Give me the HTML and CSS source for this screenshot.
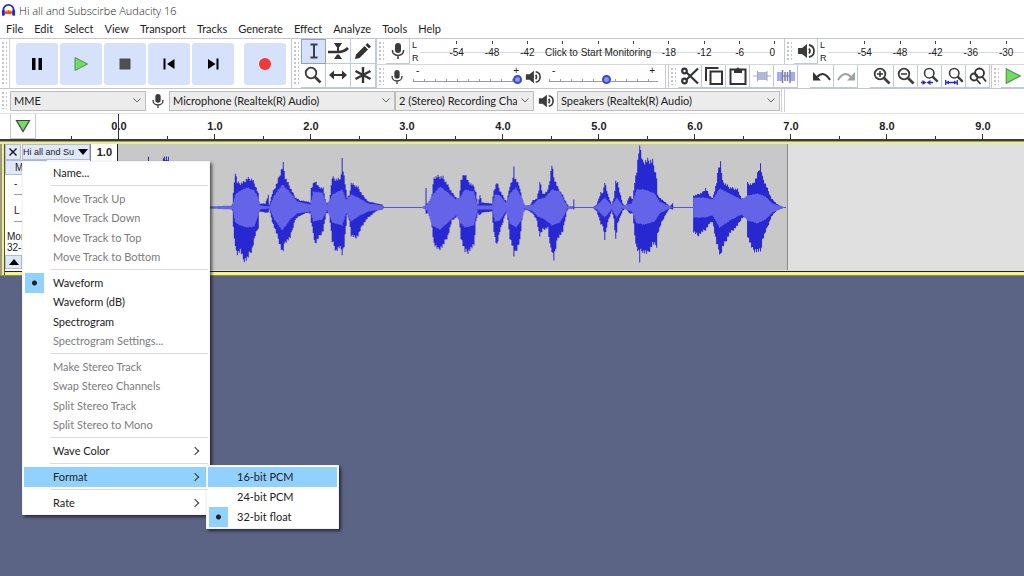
FILE: index.html
```html
<!DOCTYPE html>
<html lang="en">
<head>
    <meta charset="UTF-8">
    <meta name="viewport" content="width=device-width, initial-scale=1.0">
    <title>Hi all and Subscirbe Audacity 16</title>
    <link rel="stylesheet" href="styles.css">
</head>
<body>

    <!-- Shared icons -->
    <svg class="icon-defs" aria-hidden="true">
        <symbol id="mic" viewBox="0 0 16 18">
            <rect x="5" y="1" width="6" height="10" rx="3" fill="#3c3c3c"/>
            <path d="M2.5 8v1a5.5 4.5 0 0 0 11 0V8M8 13.5V17" fill="none" stroke="#3c3c3c" stroke-width="1.500"/>
        </symbol>
        <symbol id="speaker" viewBox="0 0 18 16">
            <path d="M1 5h4l5-4v14l-5-4H1z" fill="#3c3c3c"/>
            <path d="M12 5.500q2 2.500 0 5M12 2q5 1 5 6t-5 6" fill="none" stroke="#3c3c3c" stroke-width="1.800"/>
        </symbol>
        <symbol id="lens" viewBox="0 0 18 18">
            <circle cx="7" cy="7" r="5.300" fill="none" stroke="#3c3c3c" stroke-width="1.800"/>
            <path d="M10.500 10.500l6 6" stroke="#3c3c3c" stroke-width="2.600"/>
        </symbol>
        <symbol id="play" viewBox="0 0 16 16">
            <path d="M2 1.500l12.500 6.500L2 14.500z" fill="#6ce05c" stroke="#5a8a5a" stroke-width="1"/>
        </symbol>
    </svg>

    <header class="titlebar">
        <svg class="logo" viewBox="0 0 16 14">
            <path d="M3.500 8.500q4.500-3 9 0v3h-9z" fill="#f7a531"/>
            <path d="M4 10l1.500-2 1 2 1.500-3 1.500 3 1-2 1.500 2-1.500 1h-5z" fill="#e8402c"/>
            <path d="M2.500 8.500V7a5.500 5.500 0 0 1 11 0v1.500" fill="none" stroke="#2c2cc0" stroke-width="2"/>
            <rect x="1" y="7" width="3" height="6" rx="1" fill="#2424c8"/>
            <rect x="12" y="7" width="3" height="6" rx="1" fill="#2424c8"/>
        </svg>
        <h1>Hi all and Subscirbe Audacity 16</h1>
    </header>

    <nav class="menubar">
        <button>File</button>
        <button>Edit</button>
        <button>Select</button>
        <button>View</button>
        <button>Transport</button>
        <button>Tracks</button>
        <button>Generate</button>
        <button>Effect</button>
        <button>Analyze</button>
        <button>Tools</button>
        <button>Help</button>
    </nav>

    <div class="dock">
        <!-- Transport -->
        <div class="toolbar transport">
            <span class="grip"></span>
            <div class="transport-buttons">
                <button aria-label="Pause"><svg viewBox="0 0 16 16"><path d="M3 2h3.500v12H3zM9.500 2H13v12H9.500z"/></svg></button>
                <button aria-label="Play"><svg viewBox="0 0 16 16"><use href="#play"/></svg></button>
                <button aria-label="Stop"><svg viewBox="0 0 16 16"><rect x="2.500" y="2.500" width="11" height="11" fill="#4c5050"/></svg></button>
                <button aria-label="Skip to Start"><svg viewBox="0 0 16 16"><path d="M2.500 2.500h2v11h-2zM13.500 3v10L6 8z"/></svg></button>
                <button aria-label="Skip to End"><svg viewBox="0 0 16 16"><path d="M11.500 2.500h2v11h-2zM3 3v10l7.500-5z"/></svg></button>
                <button class="record" aria-label="Record"><svg viewBox="0 0 16 16"><circle cx="8" cy="8" r="6" fill="#f23838"/></svg></button>
            </div>
        </div>

        <!-- Tools -->
        <div class="toolbar tools">
            <span class="grip"></span>
            <div class="tool-grid">
                <button class="tool selected" aria-label="Selection Tool"><svg viewBox="0 0 18 18"><path d="M5.500 2.500h7M5.500 15.500h7M9 2.500v13" stroke="#3c3c50" stroke-width="2" fill="none"/></svg></button>
                <button class="tool wide" aria-label="Envelope Tool"><svg viewBox="0 0 22 18"><path d="M7 1h8l-2.500 4h-3zM7 17h8l-3-4.500h-2z" fill="#333"/><path d="M1 10h10q6 0 10-4" stroke="#333" stroke-width="2.600" fill="none"/><path d="M11 3v7" stroke="#333" stroke-width="2"/></svg></button>
                <button class="tool" aria-label="Draw Tool"><svg viewBox="0 0 18 18"><path d="M1 17l1-4.500L10.500 4 14 7.500 5.500 16zM11.500 3l2-2L17 4.500l-2 2z" fill="#333"/></svg></button>
                <button class="tool" aria-label="Zoom Tool"><svg viewBox="0 0 18 18"><use href="#lens"/></svg></button>
                <button class="tool" aria-label="Time Shift Tool"><svg viewBox="0 0 18 18"><path d="M0 9l5-4.500V8h8V4.500L18 9l-5 4.500V10H5v3.500z" fill="#333"/></svg></button>
                <button class="tool" aria-label="Multi-Tool"><svg viewBox="0 0 18 18"><path d="M9 1v16M1.500 5l15 8M16.500 5l-15 8" stroke="#333" stroke-width="2.400"/></svg></button>
            </div>
        </div>

        <div class="dock-right">
            <div class="dock-row">
                <!-- Recording meter -->
                <div class="toolbar meter">
                    <span class="grip"></span>
                    <button class="tool" aria-label="Record Meter"><svg viewBox="0 0 16 18"><use href="#mic"/></svg></button>
                    <div class="channels"><span>L</span><span>R</span></div>
                    <div class="scale">
                        <span>-54</span><span>-48</span><span>-42</span>
                        <span></span><span class="monitor">Click to Start Monitoring</span><span></span>
                        <span>-18</span><span>-12</span><span>-6</span><span class="zero">0</span>
                    </div>
                </div>
                <!-- Playback meter -->
                <div class="toolbar meter">
                    <span class="grip"></span>
                    <button class="tool" aria-label="Playback Meter"><svg viewBox="0 0 18 16"><use href="#speaker"/></svg></button>
                    <div class="channels"><span>L</span><span>R</span></div>
                    <div class="scale">
                        <span>-54</span><span>-48</span><span>-42</span><span>-36</span><span>-30</span>
                    </div>
                </div>
            </div>

            <div class="dock-row">
                <!-- Mixer -->
                <div class="toolbar mixer">
                    <span class="grip"></span>
                    <svg class="mixer-icon" viewBox="0 0 16 18"><use href="#mic"/></svg>
                    <div class="volume">
                        <div class="volume-ends"><span>-</span><span>+</span></div>
                        <input type="range" aria-label="Recording Volume" min="0" max="100" value="100">
                    </div>
                    <svg class="mixer-icon" viewBox="0 0 18 16"><use href="#speaker"/></svg>
                    <div class="volume">
                        <div class="volume-ends"><span>-</span><span>+</span></div>
                        <input type="range" aria-label="Playback Volume" min="0" max="100" value="53">
                    </div>
                </div>

                <!-- Edit -->
                <div class="toolbar edit">
                    <span class="grip"></span>
                    <div class="tool-group">
                        <button class="tool" aria-label="Cut"><svg viewBox="0 0 18 18"><g fill="none" stroke="#333" stroke-width="2.200"><circle cx="3.500" cy="4" r="2.300"/><circle cx="3.500" cy="14" r="2.300"/><path d="M5.500 5.500L17 16.500M5.500 12.500L17 1.500"/></g></svg></button>
                        <button class="tool" aria-label="Copy"><svg viewBox="0 0 18 18"><path d="M13.500 1H1v13M5.500 4.500H17V17H5.500z" fill="none" stroke="#333" stroke-width="2"/></svg></button>
                        <button class="tool" aria-label="Paste"><svg viewBox="0 0 18 18"><rect x="1.500" y="2.500" width="15" height="14.500" fill="none" stroke="#333" stroke-width="2"/><path d="M5 2h2.500a1.500 1.500 0 0 1 3 0H13v4H5z" fill="#333"/></svg></button>
                        <button class="tool" aria-label="Trim"><svg viewBox="0 0 18 18"><path d="M0 9h18" stroke="#a8acd8"/><path d="M4 5h10v8H4z" fill="#b4b8d8"/><path d="M4.500 4v10M14 4v10" stroke="#a0a4c4"/></svg></button>
                        <button class="tool" aria-label="Silence"><svg viewBox="0 0 18 18"><path d="M0 9h18" stroke="#666ca0"/><path d="M0 5h5v9H0zM13 5h5v9h-5z" fill="#a8a8f4"/><path d="M5.500 3v13M8 5v9M10.500 5v9M13 3v13" stroke="#787ca0" stroke-width="1.500"/></svg></button>
                    </div>
                    <div class="tool-group">
                        <button class="tool" aria-label="Undo"><svg viewBox="0 0 18 18"><path d="M4 10q7-7 13 3" fill="none" stroke="#333" stroke-width="2"/><path d="M0 5v8.500h8z" fill="#333"/></svg></button>
                        <button class="tool" aria-label="Redo"><svg viewBox="0 0 18 18"><path d="M14 10Q7 3 1 13" fill="none" stroke="#a0a0a0" stroke-width="2"/><path d="M18 5v8.500h-8z" fill="#a0a0a0"/></svg></button>
                    </div>
                    <div class="tool-group">
                        <button class="tool" aria-label="Zoom In"><svg viewBox="0 0 18 18"><use href="#lens"/><path d="M4 7h6M7 4v6" stroke="#333" stroke-width="1.500"/></svg></button>
                        <button class="tool" aria-label="Zoom Out"><svg viewBox="0 0 18 18"><use href="#lens"/><path d="M4 7h6" stroke="#333" stroke-width="1.500"/></svg></button>
                        <button class="tool" aria-label="Fit Selection"><svg viewBox="0 0 18 18"><use href="#lens" x="2" width="16" height="16"/><path d="M-1 15.500h4M8 15.500h4" stroke="#2828d0" stroke-width="1.500"/><path d="M1.500 13l4 2.500-4 2.500zM9.500 13l-4 2.500 4 2.500z" fill="#2828d0"/></svg></button>
                        <button class="tool" aria-label="Fit Project"><svg viewBox="0 0 18 18"><use href="#lens" x="3" width="16" height="16"/><path d="M.7 13v5M12.300 13v5M1 15.500h11" stroke="#2828d0" stroke-width="1.300"/><path d="M4 13.500l-3 2 3 2zM9 13.500l3 2-3 2z" fill="#2828d0"/></svg></button>
                        <button class="tool" aria-label="Zoom Toggle"><svg viewBox="0 0 18 18"><g fill="none" stroke="#333" stroke-width="1.800"><circle cx="10.500" cy="6" r="4.500"/><circle cx="5" cy="10" r="3.500"/><path d="M7.500 12.500l4 4.500M13 9.500l4 5"/></g></svg></button>
                    </div>
                </div>

                <!-- Play at speed -->
                <div class="toolbar">
                    <span class="grip"></span>
                    <button class="tool" aria-label="Play at Speed"><svg viewBox="0 0 16 16"><use href="#play"/></svg></button>
                </div>
            </div>
        </div>
    </div>

    <!-- Devices -->
    <div class="devices">
        <span class="grip"></span>
        <select class="host" aria-label="Audio Host"><option>MME</option></select>
        <svg class="device-icon" viewBox="0 0 16 18"><use href="#mic"/></svg>
        <select class="input" aria-label="Recording Device"><option>Microphone (Realtek(R) Audio)</option></select>
        <select class="channel-count" aria-label="Recording Channels"><option>2 (Stereo) Recording Channels</option></select>
        <svg class="device-icon" viewBox="0 0 18 16"><use href="#speaker"/></svg>
        <select class="output" aria-label="Playback Device"><option>Speakers (Realtek(R) Audio)</option></select>
        <span class="devices-end"></span>
    </div>

    <!-- Timeline -->
    <div class="timeline">
        <button class="pin" aria-label="Pinned Play Head"><svg viewBox="0 0 16 14"><path d="M1.500 1.500h13L8 12.500z" fill="#6ce05c" stroke="#444" stroke-width="1.200"/></svg></button>
        <ol class="ruler">
            <li class="origin">0.0</li>
            <li>1.0</li>
            <li>2.0</li>
            <li>3.0</li>
            <li>4.0</li>
            <li>5.0</li>
            <li>6.0</li>
            <li>7.0</li>
            <li>8.0</li>
            <li>9.0</li>
        </ol>
    </div>

    <main class="project">
        <section class="track">
            <div class="track-panel">
                <div class="track-head">
                    <button class="close" aria-label="Close track"><svg viewBox="0 0 8 8"><path d="M.5.5l7 7M7.500.5l-7 7" stroke="#111" stroke-width="1.400"/></svg></button>
                    <button class="track-name">Hi all and Su <svg viewBox="0 0 10 6"><path d="M0 0h10L5 6z"/></svg></button>
                </div>
                <button class="track-mute">Mute</button>
                <div class="track-slider">-</div>
                <div class="track-slider">L</div>
                <p class="track-info">Mono,<br>32-bit float</p>
                <button class="collapse" aria-label="Collapse track"><svg viewBox="0 0 10 6"><path d="M0 6h10L5 0z"/></svg></button>
            </div>
            <div class="vruler">1.0</div>
            <svg class="clip" viewBox="0 0 670 126" role="img" aria-label="Waveform">
                <path d="M0 63.500h669" stroke="#5454dc" stroke-width="1"/>
                <path id="peaks" fill="#2828d2"/>
                <path id="rms" fill="#6464e8"/>
            </svg>
        </section>

        <!-- Track drop-down menu -->
        <div class="menu track-menu">
            <div class="menu-group"><button>Name...</button></div>
            <div class="menu-group four">
                <button disabled>Move Track Up</button>
                <button disabled>Move Track Down</button>
                <button disabled>Move Track to Top</button>
                <button disabled>Move Track to Bottom</button>
            </div>
            <div class="menu-group four">
                <button class="checked">Waveform</button>
                <button>Waveform (dB)</button>
                <button>Spectrogram</button>
                <button disabled>Spectrogram Settings...</button>
            </div>
            <div class="menu-group four">
                <button disabled>Make Stereo Track</button>
                <button disabled>Swap Stereo Channels</button>
                <button disabled>Split Stereo Track</button>
                <button disabled>Split Stereo to Mono</button>
            </div>
            <div class="menu-group"><button class="parent">Wave Color</button></div>
            <div class="menu-group">
                <button class="parent active">Format</button>
                <div class="menu submenu">
                    <button class="active">16-bit PCM</button>
                    <button>24-bit PCM</button>
                    <button class="checked">32-bit float</button>
                </div>
            </div>
            <div class="menu-group"><button class="parent">Rate</button></div>
        </div>
    </main>

    <script src="wave.js"></script>
</body>
</html>
```
FILE: styles.css
```css
* {
    box-sizing: border-box;
}
body {
    margin: 0;
    min-height: 100vh;
    display: flex;
    flex-direction: column;
    overflow: hidden;
    background: #fff;
    color: #222;
    font-family: Lato, "Open Sans", sans-serif;
    font-size: 11px;
}
button {
    margin: 0;
    padding: 0;
    border: none;
    background: none;
    color: inherit;
    font: inherit;
}
svg {
    display: block;
    flex: none;
}
.icon-defs {
    position: absolute;
    width: 0;
    height: 0;
}

/* title and menu bar */
.titlebar {
    display: flex;
    align-items: center;
    gap: 3px;
    height: 20px;
    padding-left: 1px;
}
.logo {
    width: 15px;
    height: 14px;
}
.titlebar h1 {
    margin: 0;
    font-family: "Open Sans", sans-serif;
    font-size: 11px;
    font-weight: 300;
}
.menubar {
    display: flex;
    height: 18px;
    padding: 0 0 1px 1px;
}
.menubar button {
    padding: 0 6px 0 5px;
}

/* toolbars */
.dock {
    display: flex;
    height: 51px;
    border-top: 1px solid #c4c6cc;
    border-bottom: 1px solid #c4c6cc;
}
.toolbar {
    display: flex;
    align-items: stretch;
    flex: none;
    border-left: 1px solid #c8cad0;
}
.grip {
    flex: none;
    width: 5px;
    margin: 3px 2px;
    background: radial-gradient(circle at 1px 1px, #c4c4cc 1px, transparent 1px) 0 0 / 4px 4px;
}
.transport {
    width: 291px;
    border-left: none;
}
.transport-buttons {
    display: flex;
    align-items: center;
    gap: 2px;
    padding-left: 6px;
    border-left: 1px solid #d4d4d8;
}
.transport-buttons button {
    display: grid;
    place-items: center;
    width: 42px;
    height: 42px;
    border-radius: 3px;
    background: #d6e2fb;
}
.transport-buttons svg {
    width: 16px;
    height: 16px;
}
.transport-buttons .record {
    margin-left: 8px;
}
.tools {
    width: 85px;
}
.tool-grid {
    display: grid;
    grid-template-columns: repeat(3, 25px);
    grid-template-rows: 1fr 1fr;
}
.tool {
    display: grid;
    place-items: center;
    min-width: 24px;
    border-right: 1px solid #c0c8dc;
    border-bottom: 1px solid #c0c8dc;
}
.tool svg {
    width: 18px;
    height: 18px;
}
.tool.wide svg {
    width: 22px;
}
.tool.selected {
    background: #d6e2fb;
    border: 1px solid #94a0c0;
}
.dock-right {
    flex: 1;
    min-width: 0;
    display: grid;
    grid-template-rows: 25px 24px;
}
.dock-row {
    display: flex;
    min-width: 0;
    overflow: hidden;
}
.dock-row + .dock-row {
    border-top: 1px solid #d4d6dc;
}

/* meters */
.meter {
    width: 408px;
    padding-right: 9px;
}
.scale {
    flex: 1;
    display: grid;
    grid-template-columns: repeat(9, 2fr) 1fr;
    padding-left: 19px;
    background: linear-gradient(#d8dae4, #d8dae4) 0 13px / 100% 1px no-repeat;
    font-family: "Liberation Sans", Arial, sans-serif;
    font-size: 10px;
    line-height: 11px;
}
.scale span {
    display: flex;
    justify-content: center;
    min-width: 0;
    padding-top: 8px;
    background: linear-gradient(#444, #444) center 2px / 1px 3px no-repeat;
    white-space: nowrap;
}
.scale .zero {
    justify-content: flex-end;
    background-position: right 2px;
}
.channels {
    flex: none;
    display: flex;
    flex-direction: column;
    justify-content: space-around;
    width: 10px;
    padding-left: 2px;
    font-family: "Liberation Sans", Arial, sans-serif;
    font-size: 9px;
    line-height: 10px;
}

/* mixer */
.mixer {
    width: 290px;
    align-items: center;
    border-right: 1px solid #c8cad0;
}
.mixer .grip {
    align-self: stretch;
}
.mixer-icon {
    width: 16px;
    height: 16px;
    margin: 0 8px 0 3px;
}
.volume {
    width: 109px;
    padding-bottom: 3px;
}
.volume-ends {
    display: flex;
    justify-content: space-between;
    padding: 0 3px;
    font-family: "Liberation Sans", Arial, sans-serif;
    font-size: 10px;
    line-height: 9px;
}
.volume input {
    appearance: none;
    display: block;
    width: 100%;
    height: 10px;
    margin: 0;
    background: linear-gradient(#9a9aa0, #9a9aa0) 0 6px / 100% 1px no-repeat,
        repeating-linear-gradient(90deg, #9a9aa0 0 1px, transparent 1px 11px) 0 4px / 100% 2px no-repeat;
}
.volume input::-webkit-slider-thumb {
    appearance: none;
    width: 9px;
    height: 9px;
    border: 2px solid #3c44d8;
    border-radius: 50%;
    background: #8c94f4;
}

/* edit */
.edit {
    width: 323px;
    margin-left: 2px;
}
.tool-group {
    display: flex;
    margin-right: 12px;
}

/* device bar */
.devices {
    display: flex;
    align-items: center;
    height: 25px;
    padding-bottom: 1px;
    border-bottom: 1px solid #e0e0e4;
}
.devices .grip {
    align-self: stretch;
    margin-right: 3px;
}
.devices select {
    appearance: none;
    height: 20px;
    padding: 0 16px 0 3px;
    border: 1px solid #bcbcbc;
    border-radius: 0;
    color: #222;
    font: inherit;
    background: #ececec url("data:image/svg+xml,%3Csvg xmlns='http://www.w3.org/2000/svg' width='8' height='5'%3E%3Cpath d='M.5.5L4 4 7.500.5' fill='none' stroke='%23666'/%3E%3C/svg%3E") right 4px center no-repeat;
}
.device-icon {
    width: 16px;
    height: 16px;
    margin: 0 3px 0 4px;
}
.host {
    width: 136px;
}
.input {
    width: 226px;
}
.channel-count {
    width: 139px;
}
.output {
    width: 223px;
}
.devices-end {
    align-self: stretch;
    width: 4px;
    margin-left: 1px;
    border: 1px solid #d0d0d8;
    border-width: 0 1px;
}

/* timeline */
.timeline {
    display: flex;
    height: 25px;
    padding-left: 10px;
}
.pin {
    flex: none;
    display: grid;
    place-items: center;
    width: 26px;
    border: 1px solid #c4c8d8;
    border-top: none;
}
.pin svg {
    width: 16px;
    height: 14px;
}
.ruler {
    flex: 1;
    display: flex;
    overflow: hidden;
    margin: 0;
    padding-left: 35px;
    list-style: none;
    font-family: "Liberation Sans", Arial, sans-serif;
    font-size: 11px;
    font-weight: bold;
    line-height: 24px;
}
.ruler li {
    flex: 0 0 96px;
    text-align: center;
    background: linear-gradient(#333, #333) 0 100% / 1px 3px no-repeat,
        linear-gradient(#333, #333) 47px 100% / 1px 5px no-repeat;
}
.ruler .origin {
    background: linear-gradient(#333, #333) 0 100% / 1px 3px no-repeat,
        linear-gradient(#333, #333) 47px 0 / 1px 100% no-repeat;
}

/* project area */
.project {
    position: relative;
    flex: 1;
    background: #5c6485;
}
.track {
    display: flex;
    height: 137px;
    padding: 3px 0 4px 5px;
    border-top: 2px solid #3c3c3c;
    border-bottom: 1px solid #8c8c50;
    background: #e0e0e0;
    box-shadow: inset 0 1px #a0a060, inset 0 3px #ecec98, inset 2px 0 #9c9c84, inset 4px 0 #f0f080, inset 5px 0 #55553c, inset 0 -3px #f4f488, inset 0 -4px #222;
}
.track-panel {
    flex: none;
    width: 85px;
    display: flex;
    flex-direction: column;
    overflow: hidden;
    background: #fff;
    font-family: "Liberation Sans", Arial, sans-serif;
    font-size: 10px;
    line-height: 11px;
}
.track-head {
    display: flex;
    gap: 1px;
    height: 16px;
}
.track-head button,
.track-mute,
.collapse {
    background: #dfe7fa;
    border: 1px solid #b4bcd4;
}
.close {
    flex: none;
    display: grid;
    place-items: center;
    width: 16px;
}
.close svg {
    width: 8px;
    height: 8px;
}
.track-name {
    flex: 1;
    display: flex;
    align-items: center;
    justify-content: space-between;
    padding: 0 1px 0 0;
    white-space: nowrap;
    font-size: 9px;
}
.track-name svg {
    width: 10px;
    height: 6px;
}
.track-mute {
    width: 42px;
    height: 15px;
    padding-left: 9px;
    text-align: left;
}
.track-slider {
    height: 17px;
    margin: 3px 9px 7px;
    border-bottom: 1px solid #999;
}
.track-info {
    margin: 2px 0 2px 2px;
    white-space: nowrap;
}
.collapse {
    display: grid;
    place-items: center;
    width: 17px;
    height: 14px;
}
.collapse svg {
    width: 10px;
    height: 6px;
}
.vruler {
    flex: none;
    width: 28px;
    padding: 2px 5px 0 0;
    border-left: 1px solid #888;
    border-right: 1px solid #222;
    background: #fff;
    font-family: "Liberation Sans", Arial, sans-serif;
    font-weight: bold;
    line-height: 12px;
    text-align: right;
}
.clip {
    width: 670px;
    height: 126px;
    border-right: 1px solid #8c8c8c;
    background: #c8c8c8;
}

/* pop-up menus */
.menu {
    position: absolute;
    padding: 1px;
    background: #fff;
    border: 1px solid #f4f4f4;
    box-shadow: 2px 2px 3px rgba(0, 0, 0, 0.6);
}
.track-menu {
    top: 22px;
    left: 22px;
    width: 188px;
}
.submenu {
    top: -2px;
    left: 182px;
    width: 133px;
}
.menu-group {
    position: relative;
    display: grid;
    height: 20px;
}
.menu-group.four {
    height: 78px;
    grid-template-rows: repeat(4, 1fr);
}
.menu-group + .menu-group {
    margin-top: 6px;
}
.menu-group + .menu-group::before {
    content: "";
    position: absolute;
    top: -4px;
    left: 26px;
    right: 0;
    height: 1px;
    background: #dcdcdc;
}
.menu button {
    position: relative;
    display: block;
    width: 100%;
    min-height: 0;
    padding: 0 0 1px 29px;
    text-align: left;
    line-height: 17px;
    white-space: nowrap;
}
.submenu button {
    height: 20px;
}
.menu button:disabled {
    color: #7c7c7c;
}
.menu button.active {
    background: #91d1ff;
}
.menu .checked::before {
    content: "";
    position: absolute;
    inset: 0 auto 0 1px;
    width: 19px;
    background: radial-gradient(circle, #222 2px, transparent 3px) #91d1ff;
}
.menu .parent::after {
    content: "";
    position: absolute;
    top: 7px;
    right: 10px;
    width: 5px;
    height: 5px;
    border: 1px solid #333;
    border-width: 1px 1px 0 0;
    transform: rotate(45deg);
}
```
FILE: wave.js
```js
// [x, up, down] measured from the centre line, x in pixels from the clip start
const peaks = [
    [0, 0, 0], [12, 10, 10], [28, 30, 24], [30, 48, 26], [33, 20, 20], [44, 42, 30], [46, 51, 34], [50, 48, 30], [56, 10, 10], [66, 0, 0],
    [113, 0, 0], [114, 3, 3], [115, 14, 20], [117, 36, 41], [119, 25, 45], [122, 24, 43], [125, 25, 52], [129, 29, 51], [134, 28, 41],
    [137, 22, 28], [140, 14, 20], [141, 4, 4], [147, 4, 5], [150, 12, 5], [151, 3, 2], [154, 14, 14], [159, 25, 28], [164, 40, 44],
    [165, 43, 43], [167, 30, 34], [172, 20, 30], [177, 10, 12], [182, 7, 8], [189, 6, 5], [192, 5, 6], [193, 19, 15], [197, 27, 36],
    [200, 21, 31], [205, 19, 23], [208, 4, 6], [211, 5, 5], [214, 30, 34], [218, 28, 43], [221, 28, 40], [223, 32, 42], [224, 51, 45],
    [225, 34, 42], [226, 32, 38], [229, 10, 8], [231, 12, 12], [233, 24, 28], [237, 22, 30], [240, 20, 28], [244, 13, 18], [250, 6, 10],
    [259, 4, 3], [264, 3, 2], [266, 0, 0],
    [303, 0, 0], [307, 1, 1], [308, 19, 6], [309, 4, 6], [313, 4, 5], [314, 14, 20], [316, 30, 36], [320, 31, 42], [325, 30, 38],
    [330, 22, 28], [334, 15, 13], [339, 9, 9], [341, 9, 10], [343, 27, 30], [347, 34, 44], [350, 26, 44], [356, 21, 38], [358, 15, 14],
    [360, 3, 6], [362, 13, 8], [364, 5, 5], [374, 4, 4], [376, 17, 26], [379, 25, 37], [382, 17, 24], [387, 8, 8], [389, 6, 5],
    [392, 22, 30], [395, 28, 40], [396, 41, 48], [397, 30, 46], [402, 20, 33], [405, 4, 4], [408, 1, 2], [412, 2, 4], [415, 7, 6],
    [419, 9, 13], [421, 17, 24], [422, 27, 28], [425, 13, 22], [430, 17, 20], [432, 28, 38], [434, 43, 42], [436, 30, 51], [440, 20, 30],
    [445, 12, 24], [449, 4, 4], [451, 1, 1], [455, 1, 1], [456, 8, 2], [457, 0, 0],
    [475, 0, 0], [479, 3, 4], [483, 15, 16], [485, 14, 18], [487, 26, 32], [490, 13, 14], [494, 3, 4], [496, 9, 11], [498, 26, 32],
    [500, 24, 16], [505, 4, 3], [508, 1, 1], [512, 12, 6], [515, 8, 6], [517, 26, 28], [519, 36, 40], [521, 54, 44], [522, 66, 54],
    [523, 56, 44], [525, 45, 43], [530, 47, 46], [535, 46, 36], [539, 30, 38], [540, 12, 26], [544, 8, 15], [548, 5, 7], [552, 1, 1],
    [555, 4, 2], [556, 0, 0], [575, 0, 0], [576, 12, 24], [580, 13, 28], [585, 15, 24], [588, 19, 22], [592, 12, 16], [595, 9, 14],
    [599, 25, 36], [601, 40, 42], [603, 45, 47], [605, 26, 40], [612, 20, 26], [620, 18, 18], [624, 9, 11], [629, 8, 8], [630, 24, 28],
    [635, 23, 42], [639, 30, 43], [643, 43, 44], [645, 30, 32], [649, 21, 22], [654, 9, 9], [659, 4, 3], [664, 1, 1], [668, 0, 0]
];

const rms = [
    [0, 0, 0], [66, 0, 0],
    [114, 2, 2], [117, 13, 15], [122, 17, 18], [129, 20, 20], [136, 17, 19], [140, 10, 8], [142, 2, 2], [151, 1, 1], [156, 12, 12],
    [164, 23, 23], [172, 15, 12], [179, 6, 6], [192, 3, 4], [195, 16, 14], [204, 15, 12], [209, 3, 3], [214, 13, 15], [224, 18, 18],
    [228, 8, 6], [233, 13, 14], [240, 10, 9], [250, 4, 4], [264, 2, 2], [266, 0, 0], [303, 0, 0], [309, 3, 3], [314, 12, 18],
    [322, 21, 22], [330, 15, 15], [338, 8, 8], [342, 10, 15], [347, 18, 20], [356, 16, 18], [360, 2, 2], [374, 2, 2], [377, 13, 14],
    [382, 12, 13], [388, 5, 4], [392, 14, 16], [398, 20, 20], [404, 10, 12], [407, 2, 1], [415, 3, 4], [420, 8, 9], [427, 10, 12],
    [434, 18, 18], [442, 16, 15], [447, 6, 7], [450, 1, 1], [457, 0, 0], [475, 0, 0], [479, 2, 2], [487, 10, 10], [494, 2, 2],
    [499, 10, 10], [505, 2, 1], [514, 4, 4], [519, 18, 16], [527, 18, 17], [537, 14, 14], [542, 6, 6], [550, 2, 2], [556, 0, 0],
    [575, 0, 0], [576, 10, 10], [587, 10, 10], [595, 8, 8], [602, 19, 20], [614, 13, 12], [624, 8, 7], [630, 12, 13], [640, 14, 16],
    [648, 11, 12], [655, 4, 5], [664, 1, 1], [668, 0, 0]
];

// height of the envelope at pixel x, side 1 = up, side 2 = down
function heightAt(points, x, side) {
    const i = points.findIndex(p => p[0] >= x);
    if (i <= 0) return points[Math.max(i, 0)][side];
    const a = points[i - 1];
    const b = points[i];
    return a[side] + (b[side] - a[side]) * (x - a[0]) / (b[0] - a[0]);
}

function drawEnvelope(id, points, roughness) {
    const middle = 63.5;
    let top = "";
    let bottom = "";
    for (let x = 0; x < 668; x++) {
        const up = heightAt(points, x, 1) * (1 + roughness * (0.5 - ((x * 7) % 5) / 4));
        const down = heightAt(points, x, 2) * (1 + roughness * (0.5 - ((x * 11) % 7) / 6));
        top += `L${x} ${middle - up}H${x + 1}`;
        bottom = `L${x + 1} ${middle + down}H${x}` + bottom;
    }
    document.getElementById(id).setAttribute("d", `M0 ${middle}${top}${bottom}Z`);
}

drawEnvelope("peaks", peaks, 0.12);
drawEnvelope("rms", rms, 0.05);
```
